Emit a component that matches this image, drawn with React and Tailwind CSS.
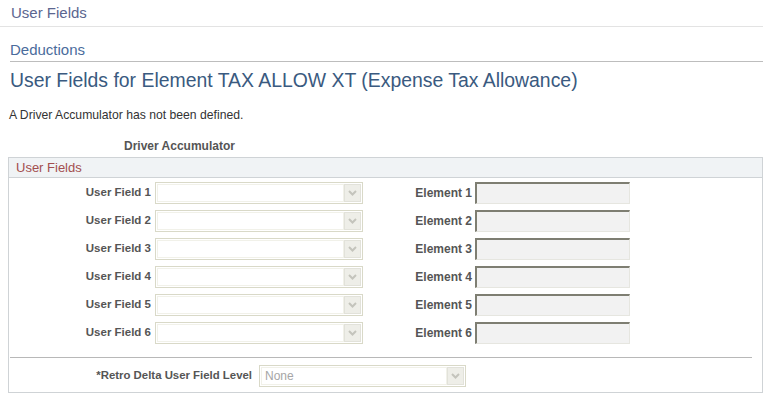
import React from "react";

function Chevron() {
  return (
    <svg width="9" height="6" viewBox="0 0 9 6">
      <path d="M1 1 L4.5 4.5 L8 1" fill="none" stroke="#c4c4bc" strokeWidth="2" />
    </svg>
  );
}

function Select({ w, value }) {
  return (
    <div
      className="flex h-[22px] border border-[#d9d9c8] bg-white p-[1px]"
      style={{ width: w }}
    >
      <div className="flex-1 flex items-center pl-[3px] text-[12px] text-[#a6a6a6] border border-[#f1f1e9]">
        {value}
      </div>
      <div className="w-[17px] flex items-center justify-center bg-[#eeeee8] border border-[#e2e2da]">
        <Chevron />
      </div>
    </div>
  );
}

function ElemInput() {
  return (
    <div className="w-[155px] h-[22px] bg-[#f2f2f2] border-t-2 border-l-2 border-t-[#7e7e72] border-l-[#7e7e72] border-b border-r border-b-[#e6e6e0] border-r-[#e6e6e0]" />
  );
}

export default function App() {
  const rows = [1, 2, 3, 4, 5, 6];
  return (
    <div
      className="w-[763px] h-[396px] bg-white text-[#333] overflow-hidden"
      style={{ fontFamily: '"Liberation Sans", Arial, sans-serif' }}
    >
      <div className="h-[27px] border-b border-[#e3e3e3] pl-[11px] pt-[2px] text-[15px] text-[#5b6690]">
        User Fields
      </div>
      <div className="ml-[10px] h-[35px] border-b border-[#bdbdbd] pt-[14px] text-[15px] text-[#4a6c9c] leading-[17px]">
        Deductions
      </div>
      <div className="pl-[10px] pt-[7px] h-[35px] text-[19.4px] leading-[23px] text-[#3a5a80]">
        User Fields for Element TAX ALLOW XT (Expense Tax Allowance)
      </div>
      <div className="pl-[9px] pt-[11px] h-[42px] text-[12.2px] leading-[14px] text-[#333]">
        A Driver Accumulator has not been defined.
      </div>
      <div className="pl-[124px] h-[18px] text-[12px] font-bold text-[#555] leading-[14px]">
        Driver Accumulator
      </div>
      <div className="ml-[8px] w-[755px] h-[236px] border border-[#cfd3d6] flex flex-col">
        <div className="h-[20px] bg-[#f0f3f5] border-b border-[#cfd3d6] pl-[7px] text-[13px] leading-[20px] text-[#a34e4e]">
          User Fields
        </div>
        <div className="flex flex-col pt-[4px] gap-[6px]">
          {rows.map((n) => (
            <div key={n} className="flex items-center h-[22px]">
              <div className="w-[146px] text-right pr-[4px] text-[11.5px] font-bold text-[#555]">
                User Field {n}
              </div>
              <Select w={208} />
              <div className="w-[112px] text-right pr-[3px] text-[12px] font-bold text-[#555]">
                Element {n}
              </div>
              <ElemInput />
            </div>
          ))}
        </div>
        <div className="ml-[1px] mt-[13px] w-[742px] border-t border-[#b8b8b8]" />
        <div className="flex items-center h-[22px] mt-[7px]">
          <div className="w-[250px] text-right pr-[7px] text-[11.4px] font-bold text-[#555]">
            *Retro Delta User Field Level
          </div>
          <Select w={207} value="None" />
        </div>
      </div>
    </div>
  );
}
